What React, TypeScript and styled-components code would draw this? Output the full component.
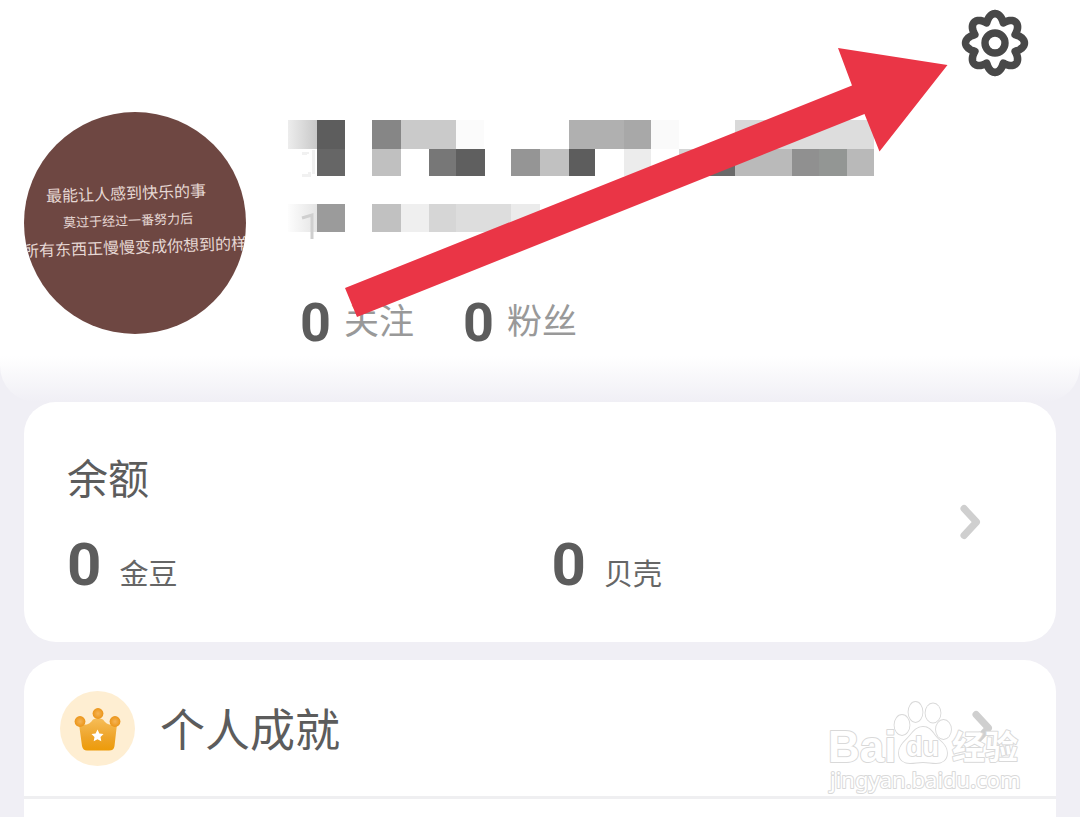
import React from 'react';
import styled, { createGlobalStyle } from 'styled-components';

const GlobalStyle = createGlobalStyle`
  * { box-sizing: border-box; }
  body {
    margin: 0;
    background: #f0eff5;
    font-family: Roboto, 'Noto Sans CJK SC', sans-serif;
    color: #5c5c5c;
  }
`;

const Page = styled.main`
  position: relative;
  height: 100vh;
  overflow: hidden;
`;

const Header = styled.header`
  position: relative;
  padding: 9px 24px 51px;
  border-radius: 0 0 36px 36px;
  background: linear-gradient(to bottom, #fff calc(100% - 46px), #f0eff5);
`;

const TopBar = styled.div`
  display: flex;
  justify-content: flex-end;
  padding-right: 27px;
`;

const IconButton = styled.button`
  display: block;
  padding: 0;
  border: 0;
  background: none;
  cursor: pointer;

  svg { display: block; }
`;

const Profile = styled.section`
  display: flex;
  align-items: flex-start;
  gap: 42px;
  margin-top: 35px;
`;

const Avatar = styled.div`
  display: flex;
  flex: none;
  flex-direction: column;
  align-items: center;
  justify-content: center;
  width: 222px;
  height: 222px;
  padding-bottom: 8px;
  border-radius: 50%;
  overflow: hidden;
  background: #6e4742;
  color: #e6d8d4;
  font-family: 'Noto Sans CJK SC', sans-serif;
  font-weight: 400;
  line-height: 27px;
  white-space: nowrap;
`;

const AvatarLine = styled.span<{ $size: number; $inset?: number }>`
  padding-right: ${(p) => p.$inset ?? 0}px;
  font-size: ${(p) => p.$size}px;
  transform: rotate(-2deg);
`;

const Info = styled.div`
  display: flex;
  flex-direction: column;
  gap: 53px;
  padding-top: 8px;

  > svg { display: block; }
`;

const Metric = styled.div<{ $gap: number }>`
  display: flex;
  align-items: baseline;
  gap: ${(p) => p.$gap}px;
`;

const Stats = styled.div`
  display: flex;
  gap: 49px;
  padding-left: 12px;

  ${Metric} { align-items: center; }
`;

const Value = styled.strong<{ $size: number }>`
  font-size: ${(p) => p.$size}px;
  line-height: 56px;
  font-weight: 700;
`;

const Label = styled.span<{ $size: number; $muted?: boolean }>`
  font-size: ${(p) => p.$size}px;
  line-height: 40px;
  font-weight: 400;
  color: ${(p) => (p.$muted ? '#999' : '#666')};
`;

const Card = styled.section`
  margin: 0 24px 18px;
  border-radius: 32px;
  background: #fff;
`;

const Balance = styled(Card)`
  display: flex;
  align-items: center;
  height: 240px;
  padding: 0 74px 0 43px;
`;

const BalanceBody = styled.div`
  flex: 1;
`;

const Title = styled.h2`
  margin: 0;
  font-size: 41px;
  line-height: 60px;
  font-weight: 400;
`;

const Amounts = styled.div`
  display: grid;
  grid-template-columns: 1fr 1fr;
  column-gap: 76px;
  margin-top: 27px;
`;

const MenuCard = styled(Card)`
  margin-bottom: 0;
  border-radius: 32px 32px 0 0;
  min-height: 160px;
`;

const MenuRow = styled.a`
  display: flex;
  align-items: center;
  height: 139px;
  padding: 0 62px 0 36px;
  border-bottom: 3px solid #efeff1;
  color: inherit;
  text-decoration: none;
`;

const MenuLabel = styled.span`
  flex: 1;
  margin-left: 25px;
  padding-top: 8px;
  font-size: 45px;
  line-height: 64px;
`;

const Arrow = styled.svg`
  position: absolute;
  top: 40px;
  left: 340px;
  pointer-events: none;
`;

const Watermark = styled.svg`
  position: absolute;
  right: 54px;
  top: 696px;
  pointer-events: none;
`;

const gearPath = (() => {
  const steps = 320;
  let d = '';
  for (let i = 0; i < steps; i++) {
    const t = (i / steps) * Math.PI * 2;
    const r = 21.8 + 7.6 * Math.pow(Math.abs(Math.cos(4 * t)), 1.05);
    d += `${i ? 'L' : 'M'}${(34 + r * Math.cos(t)).toFixed(2)} ${(34 + r * Math.sin(t)).toFixed(2)}`;
  }
  return d + 'Z';
})();

const Gear = () => (
  <svg width="68" height="68" viewBox="0 0 68 68" fill="none" stroke="#484848" strokeWidth="7.6">
    <path d={gearPath} strokeLinejoin="round" />
    <circle cx="34" cy="34" r="10" strokeWidth="7.4" />
  </svg>
);

const Chevron = () => (
  <svg width="22" height="36" viewBox="0 0 22 36" fill="none" stroke="#cfcfcf" strokeWidth="7">
    <path d="M4 4.500 16.500 18 4 31.500" strokeLinecap="round" strokeLinejoin="round" />
  </svg>
);

// x, y, width, height, fill
const blocks: [number, number, number, number, string][] = [
  [29, 0, 28, 29, '#5d5d5d'], [84, 0, 29, 29, '#868686'], [113, 0, 55, 29, '#cacaca'],
  [168, 0, 28, 29, '#fbfbfb'], [281, 0, 55, 29, '#b0b0b0'], [336, 0, 27, 29, '#a8a8a8'],
  [363, 0, 28, 29, '#fafafa'], [447, 0, 55, 29, '#d9d9d9'], [502, 0, 84, 29, '#dddddd'],
  [29, 29, 28, 27, '#666666'], [84, 29, 29, 27, '#c0c0c0'], [141, 29, 27, 27, '#777777'],
  [168, 29, 29, 27, '#5f5f5f'], [223, 29, 29, 27, '#959595'], [252, 29, 29, 27, '#c1c1c1'],
  [281, 29, 26, 27, '#5d5d5d'], [336, 29, 27, 27, '#ececec'], [391, 29, 28, 27, '#d5d5d5'],
  [419, 29, 28, 27, '#6a6a6a'], [447, 29, 57, 27, '#bababa'], [504, 29, 27, 27, '#909090'],
  [531, 29, 28, 27, '#939694'], [559, 29, 27, 27, '#b9b9b9'],
  [29, 84, 28, 28, '#9b9b9b'], [84, 84, 29, 28, '#c1c1c1'], [113, 84, 28, 28, '#efefef'],
  [141, 84, 27, 28, '#d6d6d6'], [168, 84, 55, 28, '#dddddd'], [223, 84, 29, 28, '#ebebeb'],
];

const MaskedName = () => (
  <svg width="600" height="122" viewBox="0 0 600 122" shapeRendering="crispEdges" aria-hidden="true">
    <defs>
      <linearGradient id="fadeDark">
        <stop offset="0" stopColor="#ededed" />
        <stop offset="1" stopColor="#c8c8c8" />
      </linearGradient>
      <linearGradient id="fadeLight">
        <stop offset="0" stopColor="#fdfdfd" />
        <stop offset="1" stopColor="#e4e4e4" />
      </linearGradient>
    </defs>
    <rect width="29" height="29" fill="url(#fadeDark)" />
    <rect y="84" width="29" height="28" fill="url(#fadeLight)" />
    {blocks.map(([x, y, w, h, fill]) => (
      <rect key={`${x}-${y}`} x={x} y={y} width={w} height={h} fill={fill} />
    ))}
    <path d="M14 33h5v1M25 30v24M14 55h7v-3" fill="none" stroke="#f1f1f1" strokeWidth="3" />
    <path d="M14 98l10-3v24" fill="none" stroke="#cfcfcf" strokeWidth="3" shapeRendering="auto" />
  </svg>
);

const Crown = () => (
  <svg width="75" height="75" viewBox="0 0 75 75">
    <defs>
      <linearGradient id="gold" x1="0" y1="0" x2="0" y2="1">
        <stop offset="0" stopColor="#f6bd58" />
        <stop offset="0.6" stopColor="#eea429" />
        <stop offset="1" stopColor="#ed9b08" />
      </linearGradient>
      <radialGradient id="bead">
        <stop offset="0" stopColor="#f5b456" />
        <stop offset="1" stopColor="#eb9519" />
      </radialGradient>
    </defs>
    <circle cx="37.5" cy="37.5" r="37.5" fill="#feeed2" />
    <path
      d="M19 33C26 35 30 33 33 28.500Q38 26 43 28.500C46 33 50 35 57 33L54.500 55Q54 59.500 49 59.500H27Q23 59.500 22 55Z"
      fill="url(#gold)"
    />
    <circle cx="38" cy="22.500" r="5.4" fill="url(#bead)" />
    <circle cx="20" cy="30.500" r="5.4" fill="url(#bead)" />
    <circle cx="55" cy="30.500" r="5.4" fill="url(#bead)" />
    <path d="M37.5 38.5l1.9 4 4.1.5-3 3 .8 4.300-3.800-2-3.800 2 .8-4.300-3-3 4.100-.5z" fill="#fff" />
  </svg>
);

export default function App() {
  return (
    <>
      <GlobalStyle />
      <Page>
        <Header>
          <TopBar>
            <IconButton type="button" aria-label="设置">
              <Gear />
            </IconButton>
          </TopBar>
          <Profile>
            <Avatar>
              <AvatarLine $size={16} $inset={18}>最能让人感到快乐的事</AvatarLine>
              <AvatarLine $size={13} $inset={14}>莫过于经过一番努力后</AvatarLine>
              <AvatarLine $size={16}>所有东西正慢慢变成你想到的样</AvatarLine>
            </Avatar>
            <Info>
              <MaskedName />
              <Stats>
                <Metric $gap={13}>
                  <Value $size={54}>0</Value>
                  <Label $size={35} $muted>关注</Label>
                </Metric>
                <Metric $gap={13}>
                  <Value $size={54}>0</Value>
                  <Label $size={35} $muted>粉丝</Label>
                </Metric>
              </Stats>
            </Info>
          </Profile>
          <Arrow width="610" height="282" viewBox="340 40 610 282" aria-hidden="true">
            <path d="M345 288 852 85.500 838 48 947.500 65 879.500 151.500 864.500 114 357 317z" fill="#ea3546" />
          </Arrow>
        </Header>

        <Balance>
          <BalanceBody>
            <Title>余额</Title>
            <Amounts>
              <Metric $gap={18}>
                <Value $size={60}>0</Value>
                <Label $size={29}>金豆</Label>
              </Metric>
              <Metric $gap={18}>
                <Value $size={60}>0</Value>
                <Label $size={29}>贝壳</Label>
              </Metric>
            </Amounts>
          </BalanceBody>
          <IconButton type="button" aria-label="查看余额">
            <Chevron />
          </IconButton>
        </Balance>

        <MenuCard>
          <MenuRow href="#achievements">
            <Crown />
            <MenuLabel>个人成就</MenuLabel>
            <Chevron />
          </MenuRow>
        </MenuCard>

        <Watermark
          width="200"
          height="104"
          viewBox="0 0 200 104"
          fill="#fff"
          stroke="#d9d9d9"
          strokeWidth="2"
          strokeLinejoin="round"
          paintOrder="stroke"
          fontFamily="'Liberation Sans', 'Noto Sans CJK SC', sans-serif"
        >
          <text x="2" y="66" fontSize="44" fontWeight="700">Bai</text>
          <g strokeWidth="1.8">
            <ellipse cx="76" cy="29" rx="7.500" ry="10" />
            <ellipse cx="89.500" cy="16" rx="7" ry="10" />
            <ellipse cx="107" cy="17" rx="7.500" ry="9.500" />
            <ellipse cx="117.500" cy="33.500" rx="7.500" ry="9.500" />
            <path d="M97 31c8 0 10 7 15 12 5 4 9 8 9 14 0 7-5 10-11 10-5 0-8-1-13-1s-8 1-13 1c-6 0-11-3-11-10 0-6 4-10 8-14 5-5 8-12 16-12z" />
          </g>
          <text x="80" y="60" fontSize="27" fontWeight="700">du</text>
          <text x="126" y="63" fontSize="33" fontWeight="700" fontFamily="'Noto Sans CJK SC', sans-serif">经验</text>
          <text x="4" y="92" fontSize="22" fontFamily="'Noto Sans', sans-serif">jingyan.baidu.com</text>
        </Watermark>
      </Page>
    </>
  );
}
